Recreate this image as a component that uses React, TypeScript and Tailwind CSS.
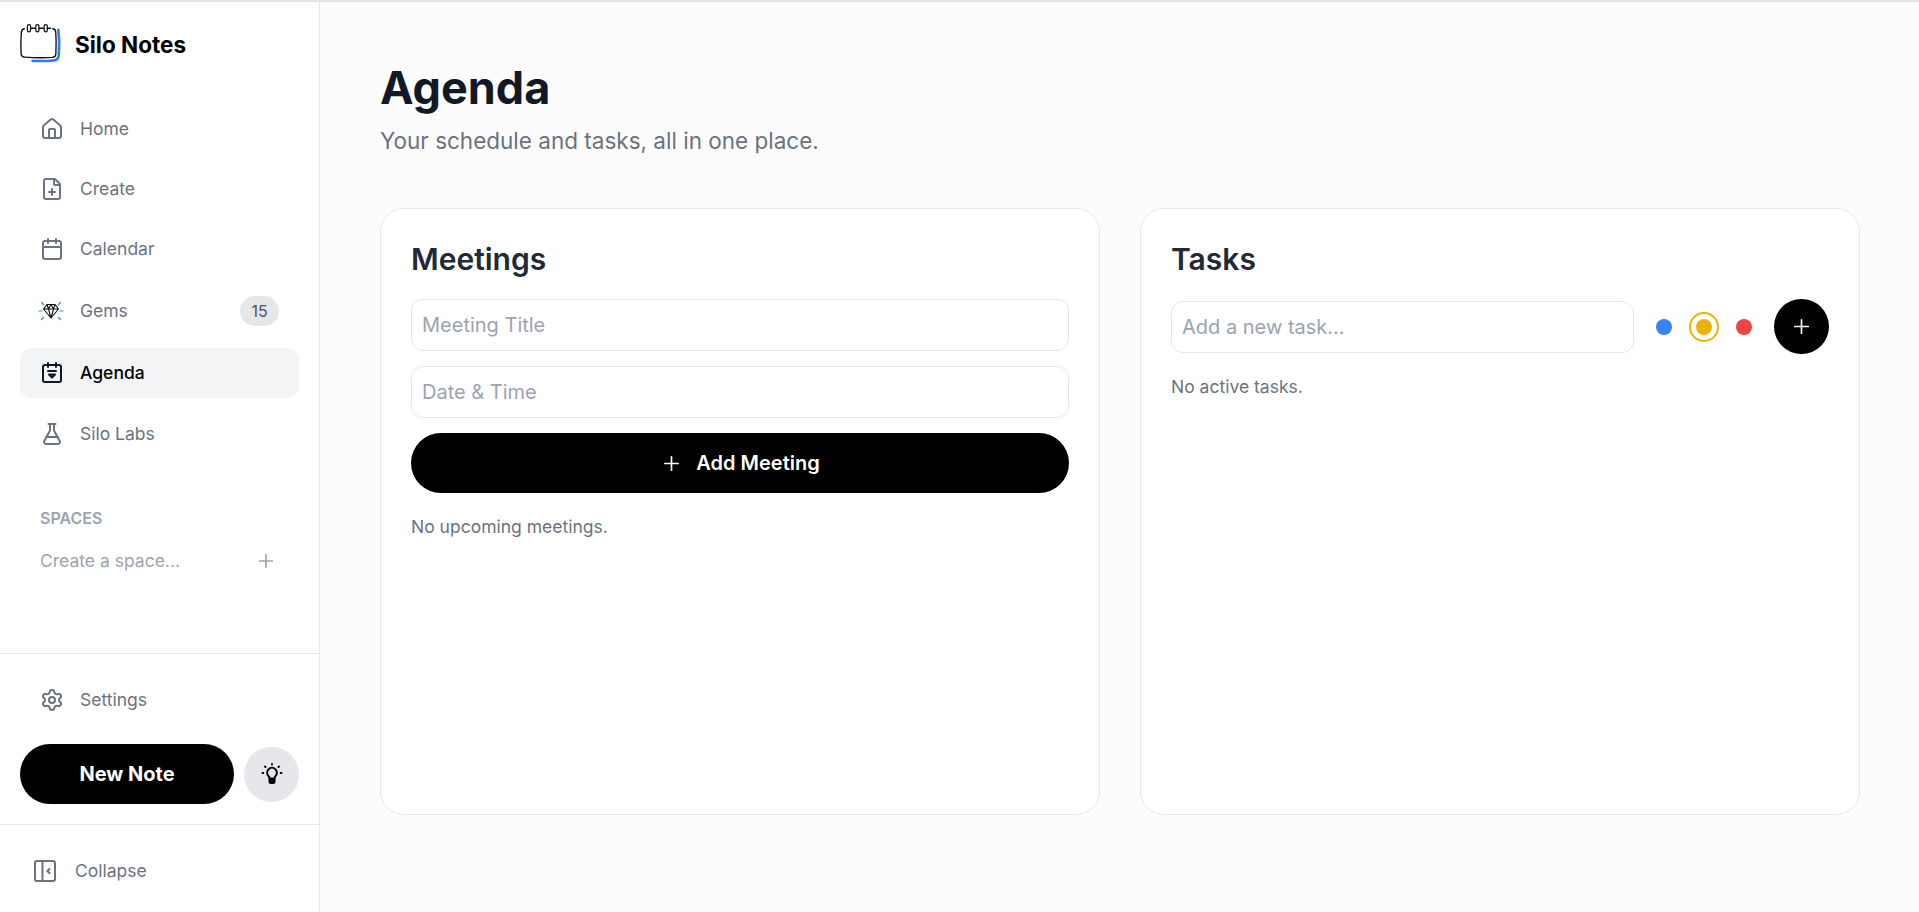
import { Calendar, FilePlus, FlaskConical, House, Plus, Settings } from "lucide-react";

const SiloLogo = () => (
  <svg width="44" height="44" viewBox="0 0 42 42" fill="none" strokeLinecap="round" strokeLinejoin="round">
    <path d="M38.500 6.500c1 8 1 17 .4 24.500-.3 3.200-2 4.600-5 4.800-6 .5-15 .6-20 .3" stroke="#2b7bf6" strokeWidth="2.500" />
    <path d="M6 5.500c-2 .3-2.600 1.500-2.800 3.500-.5 6-.6 15-.2 20.500.2 2 1.200 3 3.200 3.100 8 .5 20 .6 26.500.2 2.300-.2 3.300-1.200 3.400-3.300.4-7 .4-15-.1-21-.2-2-1-2.800-2.800-3" stroke="#111" strokeWidth="1.300" />
    <path d="M12 5h4M20 5h4M28 5h3" stroke="#111" strokeWidth="1.300" />
    <rect x="9" y="1.500" width="3" height="7" rx="1.500" stroke="#111" strokeWidth="1.200" />
    <rect x="17" y="1.500" width="3" height="7" rx="1.500" stroke="#111" strokeWidth="1.200" />
    <rect x="25" y="1.500" width="3" height="7" rx="1.500" stroke="#111" strokeWidth="1.200" />
  </svg>
);

const AgendaIcon = () => (
  <svg className="text-[#111827]" width="24" height="24" viewBox="0 0 24 24" fill="none" stroke="currentColor" strokeWidth="2" strokeLinecap="round" strokeLinejoin="round">
    <rect x="3" y="4" width="18" height="17" rx="2" />
    <path d="M8 2v4M16 2v4M8 10h8M9 13.500h6L12 16.500z" />
  </svg>
);

const GemIcon = () => (
  <svg width="26" height="20" viewBox="0 0 26 20" fill="none" strokeLinecap="round" strokeLinejoin="round">
    <path d="M1 10h3M22 10h3M3.500 1.500l2 2M22.500 1.500l-2 2M3.500 18.500l2-2M22.500 18.500l-2-2" stroke="#3b82f6" strokeWidth="1.200" />
    <path d="M9 3.500h8l3.500 4.500L13 17 5.500 8zM5.500 8h15M10.500 8 13 17l2.500-9M9 3.500 10.500 8 13 3.500 15.500 8 17 3.500" stroke="#111" strokeWidth="1.100" />
  </svg>
);

const BulbIcon = () => (
  <svg width="22" height="22" viewBox="0 0 22 22" fill="none" stroke="#000" strokeWidth="2" strokeLinecap="round" strokeLinejoin="round">
    <path d="M8.500 15.500c0-1.300-.5-2-1.100-2.700a4.800 4.800 0 1 1 7.200 0c-.6.700-1.100 1.400-1.100 2.700z" />
    <path d="M8.500 16h5v2.500a1.500 1.500 0 0 1-1.500 1.500h-2a1.500 1.500 0 0 1-1.500-1.500z" fill="#000" />
    <path d="M11 1v.5M4 3.500l.5.500M18 3.500l-.5.500M1.500 10h.8M19.700 10h.8" />
  </svg>
);

const CollapseIcon = () => (
  <svg width="24" height="24" viewBox="0 0 24 24" fill="none" stroke="currentColor" strokeWidth="2" strokeLinecap="round" strokeLinejoin="round">
    <rect x="2" y="2" width="20" height="20" rx="2" />
    <path d="M9.500 2v20M16.500 10l-2.200 2 2.200 2" />
  </svg>
);

const navClass = "flex items-center gap-[16px] rounded-xl px-[20px] text-[17.500px] text-[#6b7280]";

const App = () => {
  return (
    <div className="flex h-screen w-full border-t-2 border-[#e5e5e5] bg-[#fcfcfc] font-['Inter',sans-serif] overflow-hidden">
      <aside className="flex w-[320px] shrink-0 flex-col border-r border-[#e5e7eb] bg-white">
        <div className="flex h-[84px] items-center gap-[13px] pl-[18px] pt-[2px]">
          <SiloLogo />
          <span className="text-[22.500px] font-bold text-black">Silo Notes</span>
        </div>
        <nav className="flex flex-col px-[20px] pt-[21px]">
          <div className={`${navClass} h-[44px]`}>
            <House size={24} strokeWidth={2} />
            Home
          </div>
          <div className={`${navClass} mt-[16px] h-[44px]`}>
            <FilePlus size={24} strokeWidth={2} />
            Create
          </div>
          <div className={`${navClass} mt-[16px] h-[44px]`}>
            <Calendar size={24} strokeWidth={2} />
            Calendar
          </div>
          <div className={`${navClass} mt-[15px] h-[50px] !gap-[15px] !pl-[18px]`}>
            <GemIcon />
            <span className="flex-1 pl-[1px]">Gems</span>
            <span className="flex h-[30px] w-[39px] items-center justify-center rounded-full bg-[#e5e7eb] text-[16px] text-[#4b5563]">15</span>
          </div>
          <div className={`${navClass} mt-[12px] h-[50px] bg-[#f3f4f6] font-medium`}>
            <AgendaIcon />
            <span className="pt-[1px] text-black">Agenda</span>
          </div>
          <div className={`${navClass} mt-[14px] h-[44px]`}>
            <FlaskConical size={24} strokeWidth={2} />
            Silo Labs
          </div>
        </nav>
        <div className="mt-[52px] px-[40px] text-[16px] font-semibold leading-5 text-[#9ca3af]">SPACES</div>
        <div className="mt-[20px] flex items-center justify-between pl-[40px] pr-[42px] text-[17.500px] text-[#9ca3af]">
          <span>Create a space...</span>
          <Plus size={22} strokeWidth={1.75} />
        </div>
        <div className="flex-1" />
        <div className="border-t border-[#e5e7eb] px-[20px] pb-[20px] pt-[24px]">
          <div className={`${navClass} h-[44px]`}>
            <Settings size={24} strokeWidth={2} />
            Settings
          </div>
          <div className="mt-[22px] flex items-center gap-[10px]">
            <button className="h-[60px] w-[214px] rounded-full bg-black text-[20px] font-bold text-white">New Note</button>
            <button className="flex h-[55px] w-[55px] items-center justify-center rounded-full bg-[#e5e7eb]">
              <BulbIcon />
            </button>
          </div>
        </div>
        <div className="flex h-[88px] items-center gap-[18px] border-t border-[#e5e7eb] pl-[33px] pt-[4px] text-[17.500px] text-[#6b7280]">
          <CollapseIcon />
          <span className="pt-[1px]">Collapse</span>
        </div>
      </aside>

      <main className="flex-1 pl-[60px] pr-[59px] pt-[53px]">
        <h1 className="text-[45px] font-bold leading-[66px] text-[#111827]">Agenda</h1>
        <p className="mt-[4px] text-[22.500px] leading-[32px] text-[#6b7280]">Your schedule and tasks, all in one place.</p>
        <div className="mt-[51px] grid h-[607px] grid-cols-2 gap-[40px]">
          <section className="rounded-3xl border border-[#e5e7eb] bg-white px-[30px] pt-[30px]">
            <h2 className="text-[30px] font-semibold leading-[40px] text-[#1f2937]">Meetings</h2>
            <input
              placeholder="Meeting Title"
              className="mt-[20px] block h-[52px] w-full rounded-xl border border-[#e5e7eb] bg-white px-[10px] text-[20px] outline-none placeholder:text-[#9ca3af]"
            />
            <input
              placeholder="Date & Time"
              className="mt-[15px] block h-[52px] w-full rounded-xl border border-[#e5e7eb] bg-white px-[10px] text-[20px] outline-none placeholder:text-[#9ca3af]"
            />
            <button className="mt-[15px] flex h-[60px] w-full items-center justify-center gap-[13px] rounded-full bg-black text-[20px] font-semibold text-white">
              <Plus size={23} strokeWidth={1.75} />
              Add Meeting
            </button>
            <p className="mt-[21px] text-[17.500px] leading-[26px] text-[#6b7280]">No upcoming meetings.</p>
          </section>

          <section className="rounded-3xl border border-[#e5e7eb] bg-white px-[30px] pt-[30px]">
            <h2 className="text-[30px] font-semibold leading-[40px] text-[#1f2937]">Tasks</h2>
            <div className="mt-[20px] flex items-center">
              <input
                placeholder="Add a new task..."
                className="h-[52px] w-[463px] rounded-xl border border-[#e5e7eb] bg-white px-[10px] text-[20px] outline-none placeholder:text-[#9ca3af]"
              />
              <div className="ml-[15px] flex items-center gap-[10px]">
                <span className="flex h-[30px] w-[30px] items-center justify-center">
                  <span className="h-[16px] w-[16px] rounded-full bg-[#3b82f6]" />
                </span>
                <span className="flex h-[30px] w-[30px] items-center justify-center rounded-full border-2 border-[#eab308]">
                  <span className="h-[16px] w-[16px] rounded-full bg-[#eab308]" />
                </span>
                <span className="flex h-[30px] w-[30px] items-center justify-center">
                  <span className="h-[16px] w-[16px] rounded-full bg-[#ef4444]" />
                </span>
              </div>
              <button className="ml-[15px] flex h-[55px] w-[55px] items-center justify-center rounded-full bg-black text-white">
                <Plus size={23} strokeWidth={1.75} />
              </button>
            </div>
            <p className="mt-[20px] text-[17.500px] leading-[26px] text-[#6b7280]">No active tasks.</p>
          </section>
        </div>
      </main>
    </div>
  );
};

export default App;
